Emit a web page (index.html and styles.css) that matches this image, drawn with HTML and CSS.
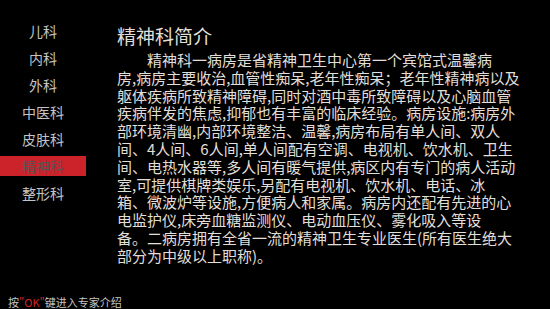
FILE: index.html
```html
<!DOCTYPE html>
<html lang="zh-CN">
<head>
<meta charset="UTF-8" />
<meta name="viewport" content="width=device-width, initial-scale=1" />
<title>精神科简介</title>
<link rel="stylesheet" href="styles.css">
</head>
<body>
<div class="screen">
  <ul class="nav">
    <li class="nav-item">儿科</li>
    <li class="nav-item">内科</li>
    <li class="nav-item">外科</li>
    <li class="nav-item">中医科</li>
    <li class="nav-item">皮肤科</li>
    <li class="nav-item active">精神科</li>
    <li class="nav-item">整形科</li>
  </ul>
  <section class="content">
    <h1 class="title">精神科简介</h1>
    <p class="intro">精神科一病房是省精神卫生中心第一个宾馆式温馨病<br>房,病房主要收治,血管性痴呆,老年性痴呆；老年性精神病以及<br>躯体疾病所致精神障碍,同时对酒中毒所致障碍以及心脑血管<br>疾病伴发的焦虑,抑郁也有丰富的临床经验。病房设施:病房外<br>部环境清幽,内部环境整洁、温馨,病房布局有单人间、双人<br>间、4人间、6人间,单人间配有空调、电视机、饮水机、卫生<br>间、电热水器等,多人间有暖气提供,病区内有专门的病人活动<br>室,可提供棋牌类娱乐,另配有电视机、饮水机、电话、冰<br>箱、微波炉等设施,方便病人和家属。病房内还配有先进的心<br>电监护仪,床旁血糖监测仪、电动血压仪、雾化吸入等设<br>备。二病房拥有全省一流的精神卫生专业医生(所有医生绝大<br>部分为中级以上职称)。</p>
  </section>
</div>
<footer class="hint">按<span class="key">"OK"</span>键进入专家介绍</footer>
</body>
</html>
```

FILE: styles.css
```css
* {
  box-sizing: border-box;
}
html, body {
  margin: 0;
  padding: 0;
  background: #000;
  height: 309px;
  overflow: hidden;
  font-family: "Noto Sans CJK SC", "Noto Sans", sans-serif;
}
body {
  display: flex;
  flex-direction: column;
}
.screen {
  flex: 1;
  display: flex;
}
.nav {
  list-style: none;
  margin: 0;
  padding: 21px 0 0;
  width: 86px;
  display: flex;
  flex-direction: column;
  gap: 7px;
}
.nav-item {
  height: 20px;
  line-height: 20px;
  font-size: 14px;
  text-align: center;
  color: #c4c4c4;
}
.nav-item.active {
  background: #cc2229;
  color: #555;
}
.content {
  padding: 24px 0 0 31px;
}
.title {
  margin: 0;
  font-size: 19px;
  font-weight: normal;
  line-height: 24px;
  color: #e2dfd8;
}
.intro {
  margin: 3px 0 0;
  font-size: 15px;
  line-height: 17.8px;
  text-indent: 2em;
  white-space: nowrap;
  color: #e2dfd8;
}
/* bottom hint */
.hint {
  height: 14px;
  line-height: 14px;
  padding-left: 8px;
  font-size: 11px;
  color: #c4c4c4;
}
.key {
  color: #d42525;
}
```
